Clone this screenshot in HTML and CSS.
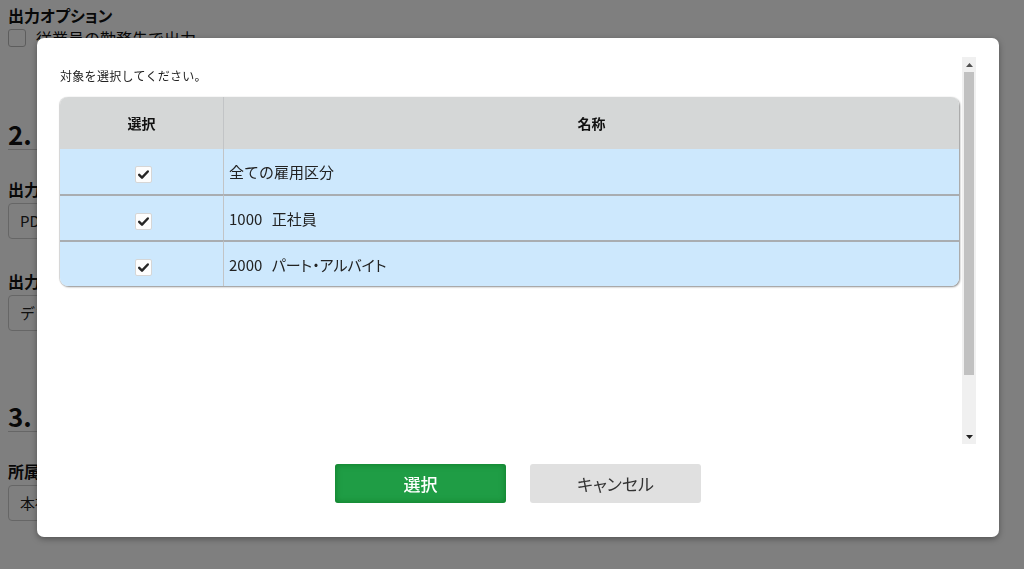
FILE: index.html
```html
<!DOCTYPE html>
<html lang="ja">
<head>
<meta charset="utf-8">
<link rel="stylesheet" href="styles.css">
</head>
<body>
<div class="page">
  <div class="opt-title">出力オプション</div>
  <div class="check-row"><span class="bg-check"></span><span>従業員の勤務先で出力</span></div>
  <div class="sec-title">2.</div>
  <div class="field-label">出力形式</div>
  <div class="field-input">PDF</div>
  <div class="field-label second">出力順</div>
  <div class="field-input">デフォルト</div>
  <div class="sec-title third">3.</div>
  <div class="field-label">所属</div>
  <div class="field-input">本社</div>
</div>
<div class="overlay"></div>
<div class="modal">
  <div class="scroll-area">
    <div class="scroll-content">
      <p class="prompt">対象を選択してください。</p>
      <table class="grid">
        <thead>
          <tr><th class="col-sel">選択</th><th class="col-name">名称</th></tr>
        </thead>
        <tbody>
          <tr><td class="col-sel"><span class="cb"><svg viewBox="0 0 16 16"><path d="M3.4 8.4 L6.4 11.4 L12.6 4.8" fill="none" stroke="#262626" stroke-width="2.6" stroke-linecap="round" stroke-linejoin="round"/></svg></span></td><td class="col-name">全ての雇用区分</td></tr>
          <tr><td class="col-sel"><span class="cb"><svg viewBox="0 0 16 16"><path d="M3.4 8.4 L6.4 11.4 L12.6 4.8" fill="none" stroke="#262626" stroke-width="2.6" stroke-linecap="round" stroke-linejoin="round"/></svg></span></td><td class="col-name">1000 正社員</td></tr>
          <tr><td class="col-sel"><span class="cb"><svg viewBox="0 0 16 16"><path d="M3.4 8.4 L6.4 11.4 L12.6 4.8" fill="none" stroke="#262626" stroke-width="2.6" stroke-linecap="round" stroke-linejoin="round"/></svg></span></td><td class="col-name">2000 <span class="kana">パート・アルバイト</span></td></tr>
        </tbody>
      </table>
    </div>
    <div class="scrollbar">
      <div class="arrow"><svg width="7" height="4" viewBox="0 0 7 4"><path d="M0 4 L3.5 0 L7 4Z" fill="#505050"/></svg></div>
      <div class="track"><div class="thumb"></div></div>
      <div class="arrow"><svg width="7" height="4" viewBox="0 0 7 4"><path d="M0 0 L3.5 4 L7 0Z" fill="#202020"/></svg></div>
    </div>
  </div>
  <div class="actions">
    <button class="btn btn-ok">選択</button>
    <button class="btn btn-cancel">キャンセル</button>
  </div>
</div>
</body>
</html>
```

FILE: styles.css
```css
html, body {
  margin: 0;
  padding: 0;
  background: #ffffff;
  font-family: "Noto Sans CJK JP", "Noto Sans", sans-serif;
  color: #111;
}

.page {
  padding: 4px 8px 0 8px;
  height: 569px;
  box-sizing: border-box;
  overflow: hidden;
}

.opt-title {
  font-size: 16px;
  font-weight: bold;
  line-height: 22px;
  font-feature-settings: "palt";
}

.check-row {
  display: flex;
  align-items: center;
  gap: 10px;
  font-size: 16px;
  line-height: 20px;
  margin-top: 2px;
}

.bg-check {
  width: 16px;
  height: 16px;
  border: 1px solid #bbb;
  border-radius: 3px;
}

.sec-title {
  font-size: 26px;
  font-weight: bold;
  line-height: 30px;
  margin-top: 71px;
  border-bottom: 1px solid #ccc;
  width: 400px;
}

.sec-title.third {
  margin-top: 70px;
}

.field-label {
  font-size: 16px;
  font-weight: bold;
  line-height: 20px;
  margin-top: 29px;
}

.field-label.second {
  margin-top: 32px;
}

.field-input {
  margin-top: 4px;
  width: 300px;
  height: 34px;
  border: 1px solid #ccc;
  border-radius: 4px;
  font-size: 15px;
  line-height: 34px;
  padding-left: 11px;
  color: #222;
}

.overlay {
  position: fixed;
  inset: 0;
  background: rgba(0, 0, 0, 0.5);
}

.modal {
  position: absolute;
  left: 37px;
  top: 38px;
  width: 962px;
  height: 499px;
  box-sizing: border-box;
  background: #fff;
  border-radius: 7px;
  box-shadow: 0 2px 6px rgba(0, 0, 0, 0.35);
  padding: 19px 23px 34px 20px;
  display: flex;
  flex-direction: column;
}

.scroll-area {
  height: 387px;
  display: flex;
}

.scroll-content {
  flex: 1;
  padding: 10px 2px 0 3px;
}

.prompt {
  margin: 0;
  font-size: 12px;
  line-height: 18px;
  color: #222;
  letter-spacing: 0.3px;
}

.grid {
  margin-top: 12px;
  width: 899px;
  border-collapse: separate;
  border-spacing: 0;
  border-radius: 8px;
  overflow: hidden;
  box-shadow: 1px 1px 2px rgba(0, 0, 0, 0.45), -1px 0 1px rgba(0, 0, 0, 0.15);
}

.grid th {
  background: #d5d7d7;
  height: 52px;
  font-size: 14px;
  font-weight: bold;
  color: #111;
  padding: 0;
}

.grid td {
  background: #cde8fd;
  height: 44px;
  padding: 0;
  border-top: 2px solid #a9adb1;
  font-size: 15px;
  color: #222;
  word-spacing: 6px;
}

.grid tbody tr:first-child td {
  border-top: none;
  height: 45px;
}

.grid .col-sel {
  width: 164px;
  text-align: center;
  border-right: 1px solid #c2c4c6;
  box-sizing: border-box;
}

.grid td.col-sel {
  padding-left: 3px;
}

.grid td.col-name {
  padding-left: 5px;
}

.kana {
  font-feature-settings: "palt";
  word-spacing: 0;
}

.cb {
  display: inline-flex;
  width: 15px;
  height: 15px;
  background: #fdfdfd;
  border: 1px solid #d6d6d6;
  border-radius: 2px;
  vertical-align: middle;
  margin-top: 4px;
  align-items: center;
  justify-content: center;
}

.cb svg {
  width: 15px;
  height: 15px;
}

.scrollbar {
  width: 15px;
  margin-left: 1px;
  background: #f0f0f0;
  display: flex;
  flex-direction: column;
}

.arrow {
  height: 15px;
  display: flex;
  align-items: center;
  justify-content: center;
}

.track {
  flex: 1;
  padding: 0 2px;
}

.thumb {
  height: 303px;
  background: #c1c1c1;
}

.actions {
  margin-top: 20px;
  display: flex;
  justify-content: center;
  gap: 24px;
  padding-left: 3px;
}

.btn {
  width: 171px;
  height: 39px;
  border: none;
  border-radius: 3px;
  font-family: "Noto Sans CJK JP", sans-serif;
  font-size: 17px;
  padding: 0;
  font-feature-settings: "palt";
}

.btn-ok {
  background: #1f9d45;
  color: #fff;
  font-weight: 500;
  box-shadow: inset 0 0 6px rgba(0, 100, 20, 0.6);
}

.btn-cancel {
  background: #e0e0e0;
  color: #333;
}
```
